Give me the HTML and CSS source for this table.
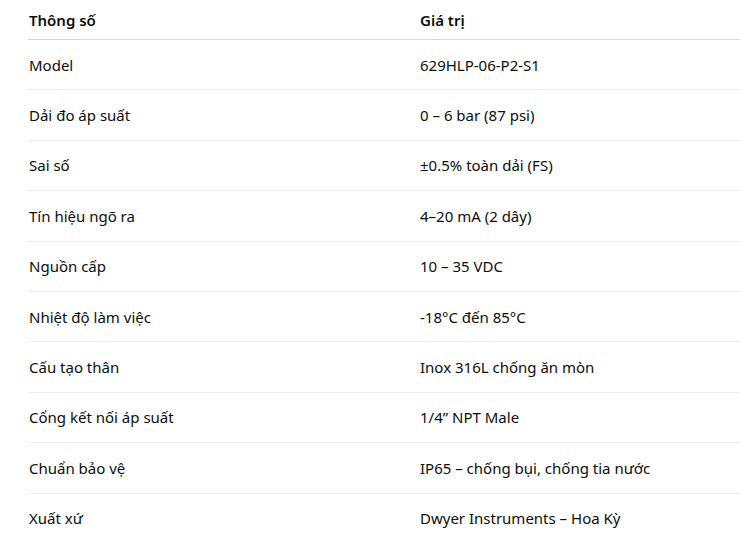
FILE: index.html
```html
<!DOCTYPE html>
<html lang="vi">
<head>
<meta charset="utf-8">
<link rel="stylesheet" href="styles.css">
</head>
<body>
<table class="spec">
  <thead>
    <tr><th class="c1">Thông số</th><th>Giá trị</th></tr>
  </thead>
  <tbody>
    <tr><td>Model</td><td>629HLP-06-P2-S1</td></tr>
    <tr><td>Dải đo áp suất</td><td>0 – 6 bar (87 psi)</td></tr>
    <tr><td>Sai số</td><td>±0.5% toàn dải (FS)</td></tr>
    <tr><td>Tín hiệu ngõ ra</td><td>4–20 mA (2 dây)</td></tr>
    <tr><td>Nguồn cấp</td><td>10 – 35 VDC</td></tr>
    <tr><td>Nhiệt độ làm việc</td><td>-18°C đến 85°C</td></tr>
    <tr><td>Cấu tạo thân</td><td>Inox 316L chống ăn mòn</td></tr>
    <tr><td>Cổng kết nối áp suất</td><td>1/4” NPT Male</td></tr>
    <tr><td>Chuẩn bảo vệ</td><td>IP65 – chống bụi, chống tia nước</td></tr>
    <tr><td>Xuất xứ</td><td>Dwyer Instruments – Hoa Kỳ</td></tr>
  </tbody>
</table>
</body>
</html>
```
FILE: styles.css
```css
html, body {
  margin: 0;
  padding: 0;
  background: #fff;
}
body {
  font-family: "Noto Sans", "Open Sans", sans-serif;
  font-size: 15px;
  color: #0d0d0d;
}
.spec {
  margin-left: 28px;
  width: 712px;
  border-collapse: collapse;
}
.spec th {
  text-align: left;
  font-weight: 600;
  height: 39px;
  padding: 0 0 0 1px;
  border-bottom: 1px solid #d9d9d9;
  vertical-align: middle;
}
.spec th.c1 {
  width: 390px;
}
.spec td {
  height: 49.4px;
  padding: 0 0 0 1px;
  border-bottom: 1px solid #ececec;
  vertical-align: middle;
}
.spec tbody tr:last-child td {
  border-bottom: none;
}
```
